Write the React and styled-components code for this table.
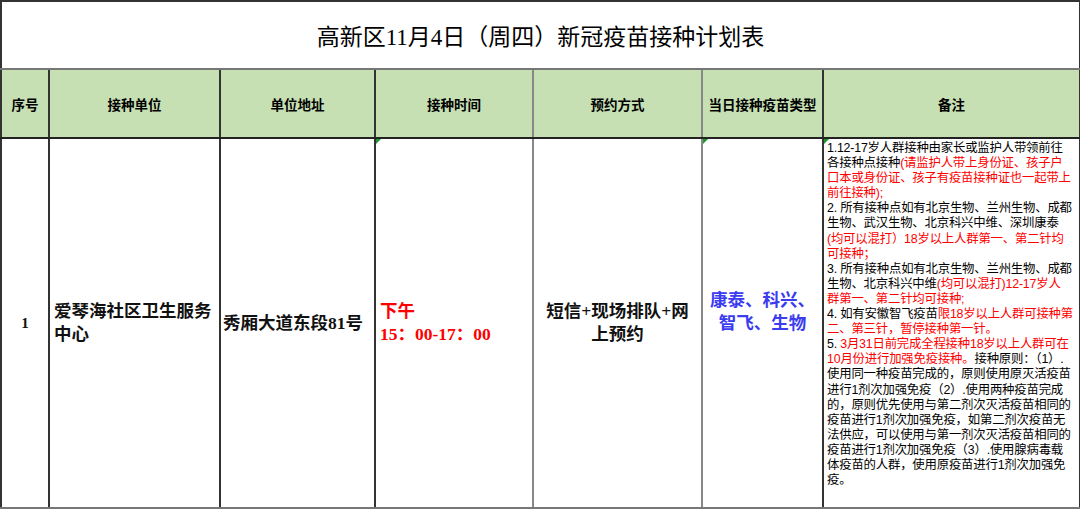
import React from 'react';
import styled, { createGlobalStyle } from 'styled-components';

const GlobalStyle = createGlobalStyle`
  html, body {
    margin: 0;
    padding: 0;
    background: #ffffff;
  }
  body {
    font-family: "Liberation Serif", "Noto Sans CJK SC", serif;
  }
`;

const Sheet = styled.table`
  width: 1079px;
  table-layout: fixed;
  border-collapse: collapse;
  border: 2px solid #333;
  color: #000;
`;

const TitleCell = styled.th`
  height: 66px;
  font-size: 23px;
  font-weight: 400;
  text-align: center;
  vertical-align: middle;
  border-bottom: 2px solid #777;
  padding: 0;
`;

const HeadCell = styled.th`
  position: relative;
  height: 67px;
  background: #c6e0b4;
  font-family: "Noto Sans CJK SC", sans-serif;
  font-size: 13.5px;
  font-weight: 700;
  text-align: center;
  vertical-align: middle;
  border-right: 2px solid ${(p) => (p.$soft ? '#888' : '#333')};
  border-bottom: 2px solid #222;
  padding: 0;
  white-space: nowrap;
`;

const Cell = styled.td`
  position: relative;
  height: 368px;
  vertical-align: middle;
  text-align: ${(p) => p.$align || 'center'};
  border-right: 2px solid ${(p) => (p.$soft ? '#888' : '#333')};
  border-bottom: 2px solid #777;
  padding: ${(p) => p.$pad || '0 4px'};
  font-family: "Liberation Serif", "Noto Sans CJK SC", serif;
  font-size: ${(p) => p.$size || '17.5px'};
  font-weight: 700;
  line-height: 23px;
  color: ${(p) => p.$color || '#111'};

  ${(p) =>
    p.$mark &&
    `
    &::before {
      content: '';
      position: absolute;
      left: 0;
      top: 0;
      border-top: 5px solid #1a9a2a;
      border-right: 5px solid transparent;
    }
  `}
`;

const Lift = styled.div`
  margin-top: -22px;
`;

const NotesCell = styled.td`
  position: relative;
  vertical-align: top;
  border-bottom: 2px solid #777;
  padding: 2px 1px 0 3px;
  font-family: "Liberation Sans", "Noto Sans CJK SC", sans-serif;
  font-size: 12.4px;
  line-height: 15.1px;
  letter-spacing: -0.2px;

  &::before {
    content: '';
    position: absolute;
    left: 0;
    top: 0;
    border-top: 5px solid #1a9a2a;
    border-right: 5px solid transparent;
  }
`;

const NoteLine = styled.div`
  white-space: nowrap;
`;

const Red = styled.span`
  color: #ff0000;
`;

const columns = [48, 171, 155, 158, 169, 121, 257];

const headers = [
  { text: '序号' },
  { text: '接种单位' },
  { text: '单位地址' },
  { text: '接种时间', soft: true },
  { text: '预约方式', soft: true },
  { text: '当日接种疫苗类型' },
  { text: '备注' },
];

// each line: array of [text, isRed]
const notes = [
  [['1.12-17岁人群接种由家长或监护人带领前往']],
  [['各接种点接种'], ['(请监护人带上身份证、孩子户', 1]],
  [['口本或身份证、孩子有疫苗接种证也一起带上', 1]],
  [['前往接种);', 1]],
  [['2. 所有接种点如有北京生物、兰州生物、成都']],
  [['生物、武汉生物、北京科兴中维、深圳康泰']],
  [['(均可以混打）18岁以上人群第一、第二针均', 1]],
  [['可接种；', 1]],
  [['3. 所有接种点如有北京生物、兰州生物、成都']],
  [['生物、北京科兴中维'], ['(均可以混打)12-17岁人', 1]],
  [['群第一、第二针均可接种;', 1]],
  [['4. 如有安徽智飞疫苗'], ['限18岁以上人群可接种第', 1]],
  [['二、第三针，暂停接种第一针。', 1]],
  [['5. '], ['3月31日前完成全程接种18岁以上人群可在', 1]],
  [['10月份进行加强免疫接种。', 1], ['接种原则：（1）.']],
  [['使用同一种疫苗完成的，原则使用原灭活疫苗']],
  [['进行1剂次加强免疫（2）.使用两种疫苗完成']],
  [['的，原则优先使用与第二剂次灭活疫苗相同的']],
  [['疫苗进行1剂次加强免疫，如第二剂次疫苗无']],
  [['法供应，可以使用与第一剂次灭活疫苗相同的']],
  [['疫苗进行1剂次加强免疫（3）.使用腺病毒载']],
  [['体疫苗的人群，使用原疫苗进行1剂次加强免']],
  [['疫。']],
];

export default function App() {
  return (
    <>
      <GlobalStyle />
      <Sheet>
        <colgroup>
          {columns.map((w, i) => (
            <col key={i} style={{ width: w }} />
          ))}
        </colgroup>
        <thead>
          <tr>
            <TitleCell colSpan={7}>高新区11月4日（周四）新冠疫苗接种计划表</TitleCell>
          </tr>
          <tr>
            {headers.map((h) => (
              <HeadCell key={h.text} $soft={h.soft}>
                {h.text}
              </HeadCell>
            ))}
          </tr>
        </thead>
        <tbody>
          <tr>
            <Cell $size="15px">1</Cell>
            <Cell $align="left">爱琴海社区卫生服务中心</Cell>
            <Cell $align="left" $pad="0 2px">
              秀厢大道东段81号
            </Cell>
            <Cell $align="left" $color="#ff0000" $soft $mark>
              下午
              <br />
              15：00-17：00
            </Cell>
            <Cell $soft>短信+现场排队+网上预约</Cell>
            <Cell $color="#3b3bf0" $mark>
              <Lift>
                康泰、科兴、
                <br />
                智飞、生物
              </Lift>
            </Cell>
            <NotesCell>
              {notes.map((line, i) => (
                <NoteLine key={i}>
                  {line.map(([text, red], j) =>
                    red ? <Red key={j}>{text}</Red> : <span key={j}>{text}</span>
                  )}
                </NoteLine>
              ))}
            </NotesCell>
          </tr>
        </tbody>
      </Sheet>
    </>
  );
}
